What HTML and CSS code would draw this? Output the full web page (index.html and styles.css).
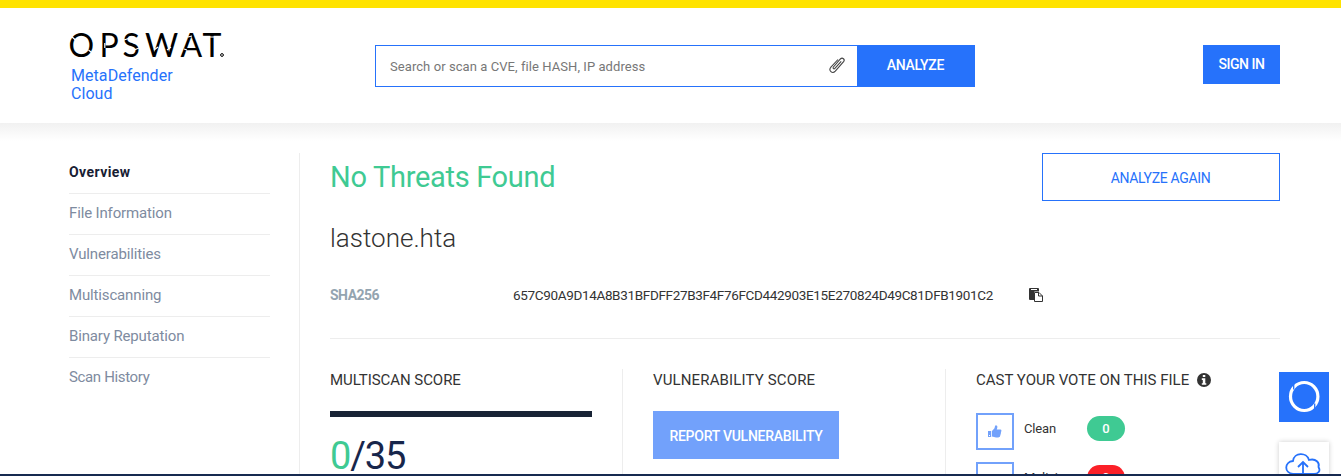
FILE: index.html
```html
<!DOCTYPE html>
<html lang="en">
<head>
<meta charset="utf-8">
<title>MetaDefender Cloud</title>
<link rel="stylesheet" href="styles.css">
</head>
<body>
<div class="page">
  <header class="header">
    <a class="brand">
      <svg class="brand-logo" width="158" height="28" viewBox="0 0 158 28">
        <text class="logo-text" y="24.800" x="-0.5 30.500 53.500 76 111.500 133.500">OPSWAT</text>
        <path class="logo-cut" d="M2 4l5 4.500M19.500 18l5 4M35.800 11v5M55 8l6-2M65 18l5-2M85 18l4-3M98 18l4-3M115 17l3 1M119 5l4-1M140 5h7"/>
        <circle class="logo-dot" cx="153" cy="23" r="1.400"/>
      </svg>
      <span class="brand-name">MetaDefender<br>Cloud</span>
    </a>
    <form class="search">
      <div class="search-box">
        <span class="placeholder">Search or scan a CVE, file HASH, IP address</span>
        <svg class="clip" width="18" height="19" viewBox="0 0 18 19"><path d="M13.2 5.300L6.900 12.400c-1 1.100-2.500-.2-1.500-1.400l7-8c2-2 5 .4 3.200 2.700l-8.300 9.500c-3 3.200-7.200-.6-4.400-4L10 3.500"/></svg>
      </div>
      <button class="btn analyze" type="button"><span>ANALYZE</span></button>
    </form>
    <button class="btn signin" type="button"><span>SIGN IN</span></button>
  </header>
  <main class="main">
    <nav class="nav">
      <a class="active"><span>Overview</span></a>
      <a><span>File Information</span></a>
      <a><span>Vulnerabilities</span></a>
      <a><span>Multiscanning</span></a>
      <a><span>Binary Reputation</span></a>
      <a><span class="history">Scan History</span></a>
    </nav>
    <section class="content">
      <div class="title-row">
        <h1>No Threats Found</h1>
        <button class="again" type="button"><span>ANALYZE AGAIN</span></button>
      </div>
      <h2>lastone.hta</h2>
      <div class="hash-row">
        <span class="hash-label">SHA256</span>
        <span class="hash">657C90A9D14A8B31BFDFF27B3F4F76FCD442903E15E270824D49C81DFB1901C2</span>
        <svg class="copy" width="14" height="14" viewBox="0 0 14 14"><path fill="#333" d="M1 0h8q1 0 1 1v2.500H6q-1 0-1 1V12H1q-1 0-1-1V1q0-1 1-1z"/><path fill="#fff" d="M2 1h6v1H2z"/><path fill="#fff" stroke="#333" d="M5.500 4.500h4.500L13.500 8v5.500h-8zM9.500 4.500V8h4"/></svg>
      </div>
      <div class="scores">
        <div class="col">
          <h3 class="t1">MULTISCAN SCORE</h3>
          <div class="bar"></div>
          <div class="score"><span class="zero">0</span>/35</div>
        </div>
        <div class="col">
          <h3 class="t2">VULNERABILITY SCORE</h3>
          <button class="report" type="button"><span>REPORT VULNERABILITY</span></button>
        </div>
        <div class="col">
          <h3 class="t3"><span>CAST YOUR VOTE ON THIS FILE</span><svg class="info" width="14" height="14" viewBox="0 0 14 14"><circle cx="7" cy="7" r="7" fill="#333"/><path fill="#fff" d="M5.800 2h2.500v2H5.800zM4.800 5.300h3.500v4.900h1v1.600H4.800v-1.600h1V6.900h-1z"/></svg></h3>
          <div class="vote">
            <div class="vote-btn"><svg width="14" height="13" viewBox="0 0 14 13"><path fill="#72a1fb" fill-rule="evenodd" d="M0 6h3.200v6H0zM1 10v1h1v-1zM4 6l2.500-2.700.6-2.600Q8-.3 9 .8c.7 1 .3 2.500-.3 3.700h3.600q1.500.2 1 1.700l-.3 1-.2 1.500-.4 1.300-.5 1.700-1.600.8H8L4 11.500z"/></svg></div>
            <span class="vote-name clean">Clean</span><span class="pill green">0</span>
          </div>
          <div class="vote">
            <div class="vote-btn"></div>
            <span class="vote-name">Malicious</span><span class="pill red">0</span>
          </div>
        </div>
      </div>
    </section>
  </main>
  <aside class="dock">
    <div class="tile blue"><svg width="50" height="50" viewBox="0 0 50 50"><ellipse cx="25.200" cy="24.500" rx="13.700" ry="14" fill="none" stroke="#fff" stroke-width="3.200"/><path d="M14.700 9v8.500M35.700 31.500V40" stroke="#2672fb" stroke-width="1.300"/></svg></div>
    <div class="tile cloud"><svg width="50" height="50" viewBox="0 0 50 50"><g fill="none" stroke="#2672fb" stroke-width="1.800"><path d="M14 32c-9-1-9-12 0-13C15 10 28 10 30 18c7-2 11 3 9.500 7C42 29 39 32 35 32z"/><path d="M24 33V21M19 25l5-5 5 5"/></g></svg></div>
  </aside>
  <div class="bottom-bar"></div>
</div>
</body>
</html>
```
FILE: styles.css
```css
* { box-sizing: border-box; }
body { margin: 0; font-family: Roboto, "Liberation Sans", sans-serif; color: #333; background: #fff; }
button { font-family: inherit; border: 0; padding: 0; }
h1, h2, h3 { margin: 0; font-weight: 400; white-space: nowrap; }
svg { display: block; flex: none; }
span { white-space: nowrap; }
.page { position: relative; height: 476px; overflow: hidden; }
.header { height: 123px; border-top: 8px solid #ffe300; padding: 0 61px 0 69px; display: flex; align-items: flex-start; background: #fff; }
.brand { width: 306px; padding-top: 24px; }
.brand-logo { overflow: visible; }
.logo-text { font-family: Lato, sans-serif; font-size: 32px; fill: #000; }
.logo-cut { fill: none; stroke: #fff; stroke-width: 1.2; }
.logo-dot { fill: none; stroke: #000; }
.brand-name { display: block; margin: 7px 0 0 2px; font-size: 16px; line-height: 18px; color: #2672fb; letter-spacing: .06px; }
.search { display: flex; margin-top: 37px; width: 600px; height: 42px; }
.search-box { flex: 1; border: 1px solid #2672fb; border-right: 0; padding: 0 11px 0 14px; display: flex; align-items: center; justify-content: space-between; }
.placeholder { font-size: 13px; color: #777; letter-spacing: .07px; }
.clip { fill: none; stroke: #444; stroke-width: 1.1; margin-bottom: 2px; }
.btn { background: #2672fb; color: #fff; font-weight: 500; font-size: 14px; }
.analyze { width: 118px; letter-spacing: -.3px; padding: 0 1px 2px 0; }
.signin { margin: 37px 0 0 auto; width: 77px; height: 39px; letter-spacing: -.45px; padding-bottom: 2px; }
.main { display: flex; padding: 30px 61px 0 69px; height: 353px; background: linear-gradient(#f1f1f1, #fff 18px); }
.nav { width: 201px; margin-right: 29px; }
.nav a { display: flex; align-items: center; height: 41px; border-bottom: 1px solid #ededed; font-size: 15px; color: #7e8ba0; padding-bottom: 3px; letter-spacing: -.15px; }
.nav a:last-child { border: 0; }
.nav .active { color: #172033; font-weight: 700; font-size: 14px; letter-spacing: .42px; }
.nav .history { letter-spacing: -.35px; }
.content { flex: 1; border-left: 1px solid #ededed; padding-left: 30px; }
.title-row { display: flex; justify-content: space-between; height: 48px; }
h1 { font-size: 29px; line-height: 48px; color: #3fca93; letter-spacing: -.3px; }
.again { width: 238px; border: 1px solid #2672fb; background: #fff; color: #2672fb; font-size: 14px; padding: 2px 1px 0 0; letter-spacing: -.33px; }
h2 { font-size: 26px; font-weight: 300; line-height: 36px; margin-top: 19px; }
.hash-row { display: flex; align-items: center; height: 40px; margin-top: 19px; font-size: 14px; }
.hash-label { width: 183px; font-weight: 700; color: #93a4b0; letter-spacing: -.5px; padding-bottom: 1px; }
.hash { width: 516px; font-size: 13.5px; letter-spacing: -.34px; }
.scores { display: flex; border-top: 1px solid #ededed; margin-top: 23px; padding-top: 30px; }
.col { width: 323px; height: 107px; }
.col:nth-child(1) { width: 293px; border-right: 1px solid #ededed; }
.col:nth-child(2) { padding-left: 30px; border-right: 1px solid #ededed; }
.col:nth-child(3) { padding-left: 30px; width: 334px; }
h3 { display: flex; align-items: center; gap: 8px; height: 22px; font-size: 15px; }
.t1 { letter-spacing: -.05px; }
.t2 { letter-spacing: .14px; }
.bar { width: 262px; height: 6px; margin-top: 20px; background: #182335; }
.score { font-size: 38px; line-height: 46px; margin-top: 16px; color: #17264b; letter-spacing: -1.1px; }
.zero { color: #3fca93; }
.report { width: 186px; height: 48px; margin-top: 20px; background: #72a1fb; color: #fff; font-size: 14px; font-weight: 500; letter-spacing: -.26px; padding-top: 2px; }
.vote { display: flex; align-items: center; height: 49px; }
h3 + .vote { margin-top: 16px; }
.vote-btn { width: 38px; height: 37px; border: 2px solid #72a1fb; display: flex; align-items: center; justify-content: center; }
.vote-name { width: 63px; margin: 0 0 6px 10px; font-size: 13px; letter-spacing: -.15px; }
.pill { width: 38px; height: 25px; margin-bottom: 6px; border-radius: 13px; color: #fff; font-size: 13px; font-weight: 500; line-height: 25px; text-align: center; }
.green { background: #3fca93; }
.red { background: #fb2028; }
.dock { position: absolute; top: 372px; left: 1279px; }
.tile { width: 50px; height: 50px; margin-bottom: 20px; }
.blue { background: #2672fb; }
.cloud { background: #fff; box-shadow: 0 0 5px rgba(0, 0, 0, .2); }
.bottom-bar { position: absolute; left: 0; right: 0; bottom: 0; height: 2px; background: #172a50; }
```
